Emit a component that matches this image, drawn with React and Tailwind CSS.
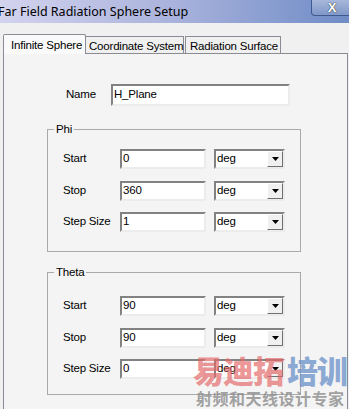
import React from "react"

const ui = { fontFamily: "'Liberation Sans', Arial, sans-serif" }

function TextBox({ value, className = "" }) {
  return (
    <div
      className={`h-[20px] bg-white border-2 border-t-[#828282] border-l-[#828282] border-b-[#ececec] border-r-[#ececec] flex items-center pl-[1px] text-[11.5px] tracking-[-0.2px] text-black ${className}`}
    >
      {value}
    </div>
  )
}

function UnitSelect() {
  return (
    <div className="w-[71px] h-[20px] bg-white border-2 border-t-[#828282] border-l-[#828282] border-b-[#ececec] border-r-[#ececec] flex items-stretch">
      <div className="flex-1 flex items-center pl-[1px] text-[11.5px] tracking-[-0.2px] text-black">deg</div>
      <div className="w-[16px] bg-[#f0f0f0] border border-t-white border-l-white border-b-[#6f6f6f] border-r-[#6f6f6f] flex items-center justify-center">
        <svg width="7" height="4" viewBox="0 0 7 4">
          <path d="M0 0h7L3.5 4z" fill="#000" />
        </svg>
      </div>
    </div>
  )
}

function Row({ label, value, mt }) {
  return (
    <div className={`flex items-center h-[20px] ${mt}`}>
      <span className="w-[57px] ml-[15px] text-[11.5px] tracking-[-0.2px] text-black">{label}</span>
      <TextBox value={value} className="w-[86px]" />
      <div className="ml-[8px]">
        <UnitSelect />
      </div>
    </div>
  )
}

function Group({ title, rows, top, bottom }) {
  return (
    <fieldset className="w-[254px] border border-[#a9a9a9] ml-[43px]">
      <legend className="ml-[6px] px-[2px] text-[11.5px] tracking-[-0.2px] leading-[14px] text-black">{title}</legend>
      <div className={`${top} ${bottom}`}>
        {rows.map((r, i) => (
          <Row key={r.label} label={r.label} value={r.value} mt={i === 0 ? "" : i === 1 ? "mt-[12px]" : "mt-[11px]"} />
        ))}
      </div>
    </fieldset>
  )
}

export default function App() {
  return (
    <div className="relative w-[349px] h-[409px] overflow-hidden bg-[#f0f0f0]" style={ui}>
      <div className="h-[23px] bg-gradient-to-r from-[#d3d3ee] via-[#a9b2dc] to-[#6f8cc6] flex items-start">
        <span
          className="ml-[-2px] mt-[3px] text-[12.5px] text-black whitespace-nowrap"
          style={{ fontFamily: "'Noto Sans', sans-serif" }}
        >
          Far Field Radiation Sphere Setup
        </span>
        <div className="ml-auto mr-[-4px] w-[42px] h-[16px] border border-t-0 border-[#3f5a8c] rounded-b-[4px] bg-gradient-to-b from-[#a7b8da] to-[#8098c8] flex items-center justify-center">
          <span className="text-white text-[13px] font-bold leading-none" style={{ textShadow: "0 0 1px #333, 0 0 1px #333" }}>X</span>
        </div>
      </div>

      <div className="flex items-end pl-[3px] h-[30px] text-[11.5px] tracking-[-0.2px] text-black">
        <div className="w-[83px] h-[20px] pl-[7px] pt-[2px] bg-[#fafafa] border border-b-0 border-[#898c95] rounded-t-[2px] relative z-10 -mb-[1px] whitespace-nowrap">
          Infinite Sphere
        </div>
        <div className="w-[98px] h-[17px] pl-[3px] pt-[1px] border border-b-0 border-l-0 border-[#898c95] whitespace-nowrap">
          Coordinate System
        </div>
        <div className="w-[96px] h-[17px] pl-[4px] pt-[1px] ml-[1px] border border-b-0 border-[#898c95] whitespace-nowrap">
          Radiation Surface
        </div>
      </div>

      <div className="ml-[3px] w-[345px] h-[360px] border-t border-l border-r border-[#898c95] bg-[#f4f4f4]">
        <div className="flex items-center mt-[30px] h-[22px]">
          <span className="ml-[62px] w-[45px] text-[11.5px] tracking-[-0.2px] text-black">Name</span>
          <div className="w-[179px] h-[22px] bg-white border-2 border-t-[#828282] border-l-[#828282] border-b-[#ececec] border-r-[#ececec] flex items-center pl-[1px] text-[11.5px] tracking-[-0.2px] text-black">
            H_Plane
          </div>
        </div>

        <div className="mt-[16px]">
          <Group
            title="Phi"
            top="pt-[13px]"
            bottom="pb-[19px]"
            rows={[
              { label: "Start", value: "0" },
              { label: "Stop", value: "360" },
              { label: "Step Size", value: "1" },
            ]}
          />
        </div>

        <div className="mt-[13px]">
          <Group
            title="Theta"
            top="pt-[17px]"
            bottom="pb-[15px]"
            rows={[
              { label: "Start", value: "90" },
              { label: "Stop", value: "90" },
              { label: "Step Size", value: "0" },
            ]}
          />
        </div>
      </div>

      <div className="absolute left-[193px] top-[352px] flex flex-col items-start pointer-events-none" style={{ fontFamily: "'Noto Sans CJK SC', sans-serif" }}>
        <div className="flex text-[31px] font-black leading-[36px] tracking-[-1px]">
          <span className="text-[#e46a6a]/70">易迪拓</span>
          <span className="text-[#6a90c8]/75 ml-[4px]">培训</span>
        </div>
        <div className="ml-[3px] text-[16px] font-bold leading-[20px] text-[#8a8a8a]/80 tracking-[0.5px]">射频和天线设计专家</div>
      </div>
    </div>
  )
}
